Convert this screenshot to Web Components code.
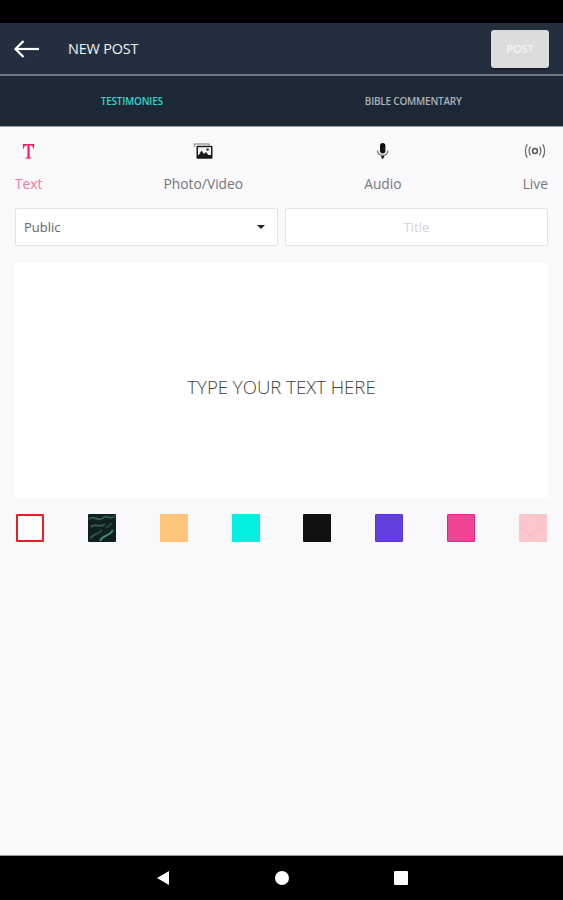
<!DOCTYPE html>
<html>
<head>
<meta charset="utf-8">
<title>New post</title>
<style>
    html, body { margin: 0; height: 100%; }
    body { background: #000; font-family: "Open Sans", sans-serif; }
</style>
</head>
<body>
<post-screen></post-screen>

<script>
// Icons {{{1

const ICONS = {
    back: `<svg width="28" height="20" viewBox="0 0 28 20" fill="none" stroke="#fff" stroke-width="2.2">
        <path d="M2 10H26"/><path d="M10.5 2L2.5 10L10.5 18"/></svg>`,
    text: `<svg width="13" height="15" viewBox="0 0 14 16" fill="#f5205a">
        <path d="M1 0H13V5H12.2C11.8 2.6 10.8 1.2 8.2 1.2V13.6C8.2 14.4 9 14.7 10.4 14.8V15.6H3.6V14.8C5 14.7 5.8 14.4 5.8 13.6V1.2C3.2 1.2 2.2 2.6 1.8 5H1Z"/></svg>`,
    photo: `<svg width="22" height="18" viewBox="0 0 22 18">
        <path d="M2.5 5V2H17V3.5" fill="none" stroke="#a2a2a4" stroke-width="1.6"/>
        <rect x="4.5" y="3.8" width="16" height="13" rx="1" fill="#1b1b1b"/>
        <rect x="6" y="5.2" width="13" height="7.8" fill="#f3f3f5"/>
        <path d="M6 14.5L9.5 8.5L12 12L14 10L17.5 14.5Z" fill="#1b1b1b"/>
        <circle cx="15.6" cy="7.6" r="1.2" fill="#1b1b1b"/></svg>`,
    mic: `<svg width="13" height="17" viewBox="0 0 13 17">
        <rect x="4" y="0" width="5.4" height="10.5" rx="2.7" fill="#111"/>
        <path d="M1.5 7.5C1.8 10.8 3.8 12.4 6.7 12.4S11.6 10.8 11.9 7.5" fill="none" stroke="#666" stroke-width="1.2"/>
        <path d="M4.7 13H8.7L6.7 16.5Z" fill="#222"/></svg>`,
    live: `<svg width="23" height="16" viewBox="0 0 23 16" fill="none" stroke="#6a6a6c" stroke-width="1.3">
        <circle cx="11.5" cy="8" r="2.6" stroke="#555" stroke-width="1.6"/>
        <path d="M6.8 3.5C5.2 6 5.2 10 6.8 12.5"/><path d="M16.2 3.5C17.8 6 17.8 10 16.2 12.5"/>
        <path d="M3.4 1C.8 5 .8 11 3.4 15"/><path d="M19.6 1C22.2 5 22.2 11 19.6 15"/></svg>`,
};

// <post-header> {{{1

class PostHeader extends HTMLElement {
    connectedCallback() {
        this.attachShadow({ mode: 'open' }).innerHTML = `
        <style>
        :host {
            display: flex;
            align-items: center;
            height: 51px;
            padding: 0 14px 0 13px;
            background: #232f3e;
            border-bottom: 2px solid #6d7680;
        }
        .back { display: flex; margin-right: 27px; }
        .title { flex: 1; color: #f2f3f4; font-size: 14.4px; letter-spacing: -.15px; }
        .post {
            width: 58px;
            height: 38px;
            box-sizing: border-box;
            display: flex;
            align-items: center;
            justify-content: center;
            background: #dcdcdc;
            border-radius: 3px;
            color: #f4f4f4;
            font-size: 11px;
            font-weight: 600;
            box-shadow: 0 1px 2px rgba(0,0,0,.5);
        }
        </style>
        <span class="back">${ICONS.back}</span>
        <span class="title">NEW POST</span>
        <span class="post">POST</span>`;
    }
}

// <post-tabs> {{{1

class PostTabs extends HTMLElement {
    connectedCallback() {
        this.attachShadow({ mode: 'open' }).innerHTML = `
        <style>
        :host {
            display: grid;
            grid-template-columns: 1fr 1fr;
            height: 50px;
            background: #1c2835;
            border-bottom: 1px solid #9a9a9a;
            font-size: 10px;
            font-weight: 600;
            letter-spacing: -.22px;
        }
        span { display: flex; align-items: center; justify-content: center; padding-right: 18px; }
        .on { color: #2fd6cc; }
        .off { color: #aeb3b9; }
        </style>
        <span class="on">TESTIMONIES</span>
        <span class="off">BIBLE COMMENTARY</span>`;
    }
}

// <type-option> {{{1

class TypeOption extends HTMLElement {
    connectedCallback() {
        const active = this.hasAttribute('active');
        this.attachShadow({ mode: 'open' }).innerHTML = `
        <style>
        :host {
            display: flex;
            flex-direction: column;
            align-items: center;
            color: ${active ? '#f47a96' : '#77777b'};
            font-size: 13.8px;
        }
        .icon { height: 22px; display: flex; align-items: center; justify-content: center; margin-bottom: 12px; width: 22px; }
        </style>
        <span class="icon">${ICONS[this.getAttribute('icon')]}</span>
        <slot></slot>`;
    }
}

// <color-swatch> {{{1

class ColorSwatch extends HTMLElement {
    connectedCallback() {
        this.attachShadow({ mode: 'open' }).innerHTML = `
        <style>
        :host {
            display: block;
            width: 28px;
            height: 28px;
            box-sizing: border-box;
            border-radius: 1px;
            overflow: hidden;
        }
        ::slotted(svg) { display: block; }
        </style>
        <slot></slot>`;
        this.style.background = this.getAttribute('color');
        const edge = this.getAttribute('edge');
        if (edge)
            this.style.border = edge;
    }
}

// <post-screen> {{{1

class PostScreen extends HTMLElement {
    connectedCallback() {
        this.attachShadow({ mode: 'open' }).innerHTML = `
        <style>
        :host {
            display: flex;
            flex-direction: column;
            height: 900px;
            background: #000;
        }
        .status { height: 23px; flex: none; }
        main {
            flex: 1;
            background: #f9f9fc;
            padding: 13px 15px 0;
            display: flex;
            flex-direction: column;
        }
        .types { display: flex; justify-content: space-between; height: 68px; }
        .fields { display: grid; grid-template-columns: 263px 263px; gap: 7px; }
        .field {
            height: 38px;
            box-sizing: border-box;
            background: #fff;
            border: 1px solid #e3e3e6;
            border-radius: 2px;
            display: flex;
            align-items: center;
            font-size: 13px;
            padding: 0 12px 0 8px;
        }
        .select { justify-content: space-between; color: #66666a; }
        .arrow { width: 0; height: 0; border: 4px solid transparent; border-top: 4.5px solid #222; border-bottom: 0; }
        .input { justify-content: center; color: #d2d2d4; padding-right: 8px; padding-left: 8px; }
        .card {
            height: 235px;
            box-sizing: border-box;
            padding-top: 11px;
            margin-top: 17px;
            background: #fff;
            border-radius: 3px;
            display: flex;
            align-items: center;
            justify-content: center;
            color: #3f3f42;
            font-size: 18.6px;
            font-weight: 300;
        }
        .swatches { display: flex; justify-content: space-between; margin-top: 16px; padding: 0 1px; }
        nav {
            flex: none;
            height: 44px;
            border-top: 1px solid #9a9a9a;
            display: flex;
            align-items: center;
            justify-content: center;
            gap: 105px;
        }
        nav svg { display: block; }
        </style>
        <div class="status"></div>
        <post-header></post-header>
        <post-tabs></post-tabs>
        <main>
            <div class="types">
                <type-option icon="text" active>Text</type-option>
                <type-option icon="photo">Photo/Video</type-option>
                <type-option icon="mic">Audio</type-option>
                <type-option icon="live">Live</type-option>
            </div>
            <div class="fields">
                <div class="field select"><span>Public</span><span class="arrow"></span></div>
                <div class="field input">Title</div>
            </div>
            <div class="card">TYPE YOUR TEXT HERE</div>
            <div class="swatches">
                <color-swatch color="#fff" edge="2px solid #ee1c25"></color-swatch>
                <color-swatch color="#10201e">
                    <svg width="28" height="28" viewBox="0 0 28 28" fill="none" stroke="#2f5c50" stroke-width="2">
                        <path d="M1 5C6 1 10 8 15 4S23 7 27 2"/><path d="M3 13C8 8 11 15 17 10"/>
                        <path d="M12 27C15 20 20 24 25 16" stroke="#3f8a70"/><path d="M2 24L9 19"/>
                        <path d="M18 14L24 9" stroke="#264a42"/><path d="M9 20L14 16" stroke="#264a42"/>
                    </svg>
                </color-swatch>
                <color-swatch color="#fec57b"></color-swatch>
                <color-swatch color="#04efdf"></color-swatch>
                <color-swatch color="#111010"></color-swatch>
                <color-swatch color="#6440e0" edge="1px solid #5a30e6"></color-swatch>
                <color-swatch color="#ef4393" edge="1px solid #ec1c8c"></color-swatch>
                <color-swatch color="#fcc6cd">
                    <svg width="28" height="28" viewBox="0 0 28 28" fill="none" stroke="#f8b8c0" stroke-width="1">
                        <path d="M1 14C6 13 9 18 11 24"/><path d="M11 20C15 17 19 18 23 13"/><path d="M16 1C18 3 22 3 27 3"/>
                    </svg>
                </color-swatch>
            </div>
        </main>
        <nav>
            <svg width="14" height="16" viewBox="0 0 14 16"><path d="M1 8L13 1V15Z" fill="#fff"/></svg>
            <svg width="14" height="14" viewBox="0 0 14 14"><circle cx="7" cy="7" r="7" fill="#fff"/></svg>
            <svg width="14" height="14" viewBox="0 0 14 14"><rect width="14" height="14" rx="1" fill="#fff"/></svg>
        </nav>`;
    }
}

// }}}

customElements.define('post-header', PostHeader);
customElements.define('post-tabs', PostTabs);
customElements.define('type-option', TypeOption);
customElements.define('color-swatch', ColorSwatch);
customElements.define('post-screen', PostScreen);
</script>
</body>
</html>
